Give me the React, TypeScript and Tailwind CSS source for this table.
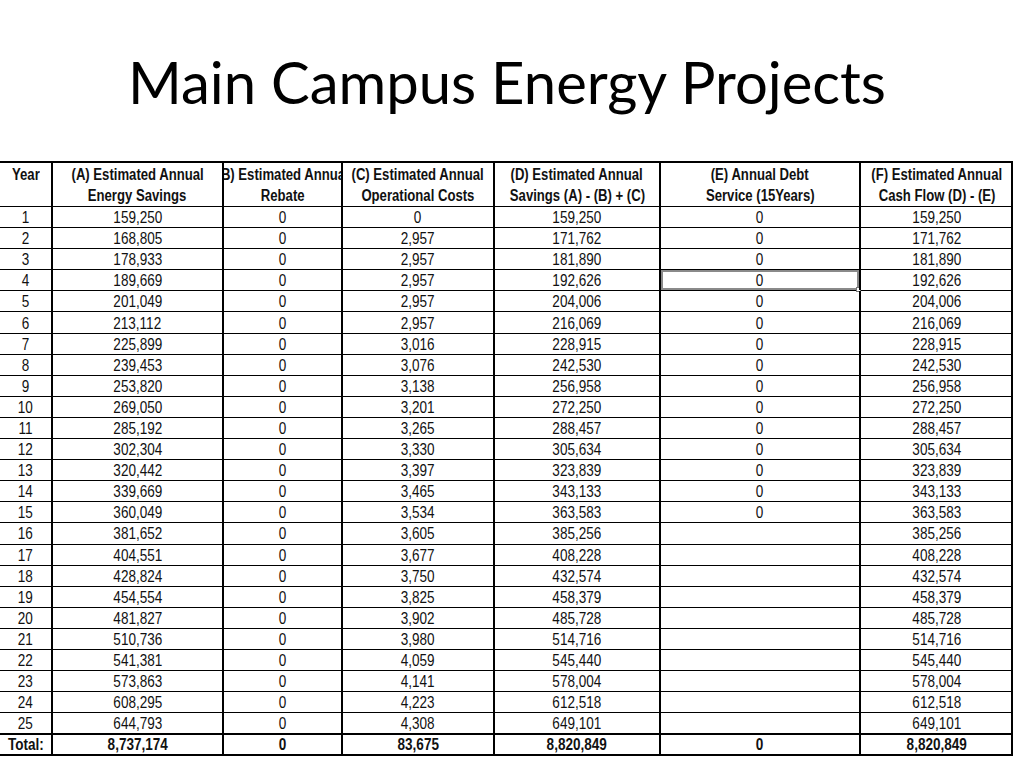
import React from "react"

type Row = [string, string, string, string, string, string, string]

const rows: Row[] = [
  ["1", "159,250", "0", "0", "159,250", "0", "159,250"],
  ["2", "168,805", "0", "2,957", "171,762", "0", "171,762"],
  ["3", "178,933", "0", "2,957", "181,890", "0", "181,890"],
  ["4", "189,669", "0", "2,957", "192,626", "0", "192,626"],
  ["5", "201,049", "0", "2,957", "204,006", "0", "204,006"],
  ["6", "213,112", "0", "2,957", "216,069", "0", "216,069"],
  ["7", "225,899", "0", "3,016", "228,915", "0", "228,915"],
  ["8", "239,453", "0", "3,076", "242,530", "0", "242,530"],
  ["9", "253,820", "0", "3,138", "256,958", "0", "256,958"],
  ["10", "269,050", "0", "3,201", "272,250", "0", "272,250"],
  ["11", "285,192", "0", "3,265", "288,457", "0", "288,457"],
  ["12", "302,304", "0", "3,330", "305,634", "0", "305,634"],
  ["13", "320,442", "0", "3,397", "323,839", "0", "323,839"],
  ["14", "339,669", "0", "3,465", "343,133", "0", "343,133"],
  ["15", "360,049", "0", "3,534", "363,583", "0", "363,583"],
  ["16", "381,652", "0", "3,605", "385,256", "", "385,256"],
  ["17", "404,551", "0", "3,677", "408,228", "", "408,228"],
  ["18", "428,824", "0", "3,750", "432,574", "", "432,574"],
  ["19", "454,554", "0", "3,825", "458,379", "", "458,379"],
  ["20", "481,827", "0", "3,902", "485,728", "", "485,728"],
  ["21", "510,736", "0", "3,980", "514,716", "", "514,716"],
  ["22", "541,381", "0", "4,059", "545,440", "", "545,440"],
  ["23", "573,863", "0", "4,141", "578,004", "", "578,004"],
  ["24", "608,295", "0", "4,223", "612,518", "", "612,518"],
  ["25", "644,793", "0", "4,308", "649,101", "", "649,101"],
]

const total: Row = ["Total:", "8,737,174", "0", "83,675", "8,820,849", "0", "8,820,849"]

const headers: [string, string][] = [
  ["Year", ""],
  ["(A) Estimated Annual", "Energy Savings"],
  ["(B) Estimated Annual", "Rebate"],
  ["(C) Estimated Annual", "Operational Costs"],
  ["(D) Estimated Annual", "Savings (A) - (B) + (C)"],
  ["(E) Annual Debt", "Service (15Years)"],
  ["(F) Estimated Annual", "Cash Flow (D) - (E)"],
]

const widths = ["w-[51px]", "w-[171px]", "w-[119px]", "w-[152px]", "w-[166px]", "w-[200px]", "w-[154px]"]

// vertical rules between columns; first column has no left rule
const vrule = (i: number) => (i === 0 ? "" : "border-l-2 border-l-black")

// Arial Narrow is not around, so squeeze Liberation Sans horizontally
function Narrow({ children }: { children: React.ReactNode }) {
  return <span className="inline-block whitespace-nowrap scale-x-[0.82]">{children}</span>
}

export default function App() {
  return (
    <div className="w-[1024px] h-[768px] bg-white overflow-hidden">
      <div className="h-[161px] flex items-start justify-center pt-[48px] pr-[10px]">
        <h1
          className="text-[58px] leading-[68px] text-black"
          style={{ fontFamily: "Lato, 'Open Sans', sans-serif" }}
        >
          Main Campus Energy Projects
        </h1>
      </div>

      <div
        className="w-[1013px] text-[#111]"
        style={{ fontFamily: "'Liberation Sans', Arial, sans-serif" }}
      >
        <div className="flex border-t-2 border-black border-r-2 border-r-black">
          {headers.map(([a, b], i) => (
            <div
              key={i}
              className={`${widths[i]} shrink-0 h-[43px] overflow-hidden flex flex-col items-center justify-center font-bold text-[16px] leading-[21px] ${vrule(i)}`}
            >
              <Narrow>{a}</Narrow>
              <Narrow>{b || "\u00a0"}</Narrow>
            </div>
          ))}
        </div>

        {rows.map((r, ri) => (
          <div key={ri} className="flex border-t border-black border-r-2 border-r-black">
            {r.map((v, i) => (
              <div
                key={i}
                className={`${widths[i]} shrink-0 h-[20.1px] flex items-center justify-center text-[16.5px] leading-[20px] relative ${vrule(i)}`}
              >
                <Narrow>{v}</Narrow>
                {ri === 3 && i === 5 && (
                  <div className="absolute inset-0 border-2 border-[#8a8a8a]">
                    <div className="absolute right-[-4px] bottom-[-4px] w-[5px] h-[5px] bg-white border border-[#777]" />
                  </div>
                )}
              </div>
            ))}
          </div>
        ))}

        <div className="flex border-t-2 border-black border-b-2 border-b-black border-r-2 border-r-black">
          {total.map((v, i) => (
            <div
              key={i}
              className={`${widths[i]} shrink-0 h-[19px] flex items-center justify-center font-bold text-[16.5px] leading-[19px] ${vrule(i)}`}
            >
              <Narrow>{v}</Narrow>
            </div>
          ))}
        </div>
      </div>
    </div>
  )
}
